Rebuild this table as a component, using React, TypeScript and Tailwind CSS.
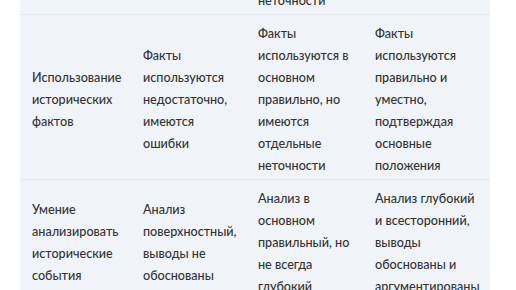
const ROWS = [
  [
    "Знание исторических дат и событий",
    "Даты и события называются с ошибками",
    "Даты и события в основном названы верно, имеются отдельные неточности",
    "Даты и события названы точно и без ошибок",
  ],
  [
    "Использование исторических фактов",
    "Факты используются недостаточно, имеются ошибки",
    "Факты используются в основном правильно, но имеются отдельные неточности",
    "Факты используются правильно и уместно, подтверждая основные положения",
  ],
  [
    "Умение анализировать исторические события",
    "Анализ поверхностный, выводы не обоснованы",
    "Анализ в основном правильный, но не всегда глубокий",
    "Анализ глубокий и всесторонний, выводы обоснованы и аргументированы",
  ],
];

export default function App() {
  return (
    <div className="h-[290px] overflow-hidden bg-white px-5">
      <table
        className="-mt-[150px] w-[470px] table-fixed border-collapse bg-[#f0f4f9] text-[12.6px] font-medium leading-[22px] text-[#333]"
        style={{ fontFamily: "Lato, 'Noto Sans', sans-serif" }}
      >
        <colgroup>
          <col className="w-[111px]" />
          <col className="w-[115px]" />
          <col className="w-[117px]" />
          <col className="w-[127px]" />
        </colgroup>
        <tbody>
          {ROWS.map((row, r) => (
            <tr key={r} className="border-b border-[#e4e9f0]">
              {row.map((cell, c) => (
                <td key={c} className="px-3 pt-[8px] pb-[2px] align-middle">
                  {cell}
                </td>
              ))}
            </tr>
          ))}
        </tbody>
      </table>
    </div>
  );
}
